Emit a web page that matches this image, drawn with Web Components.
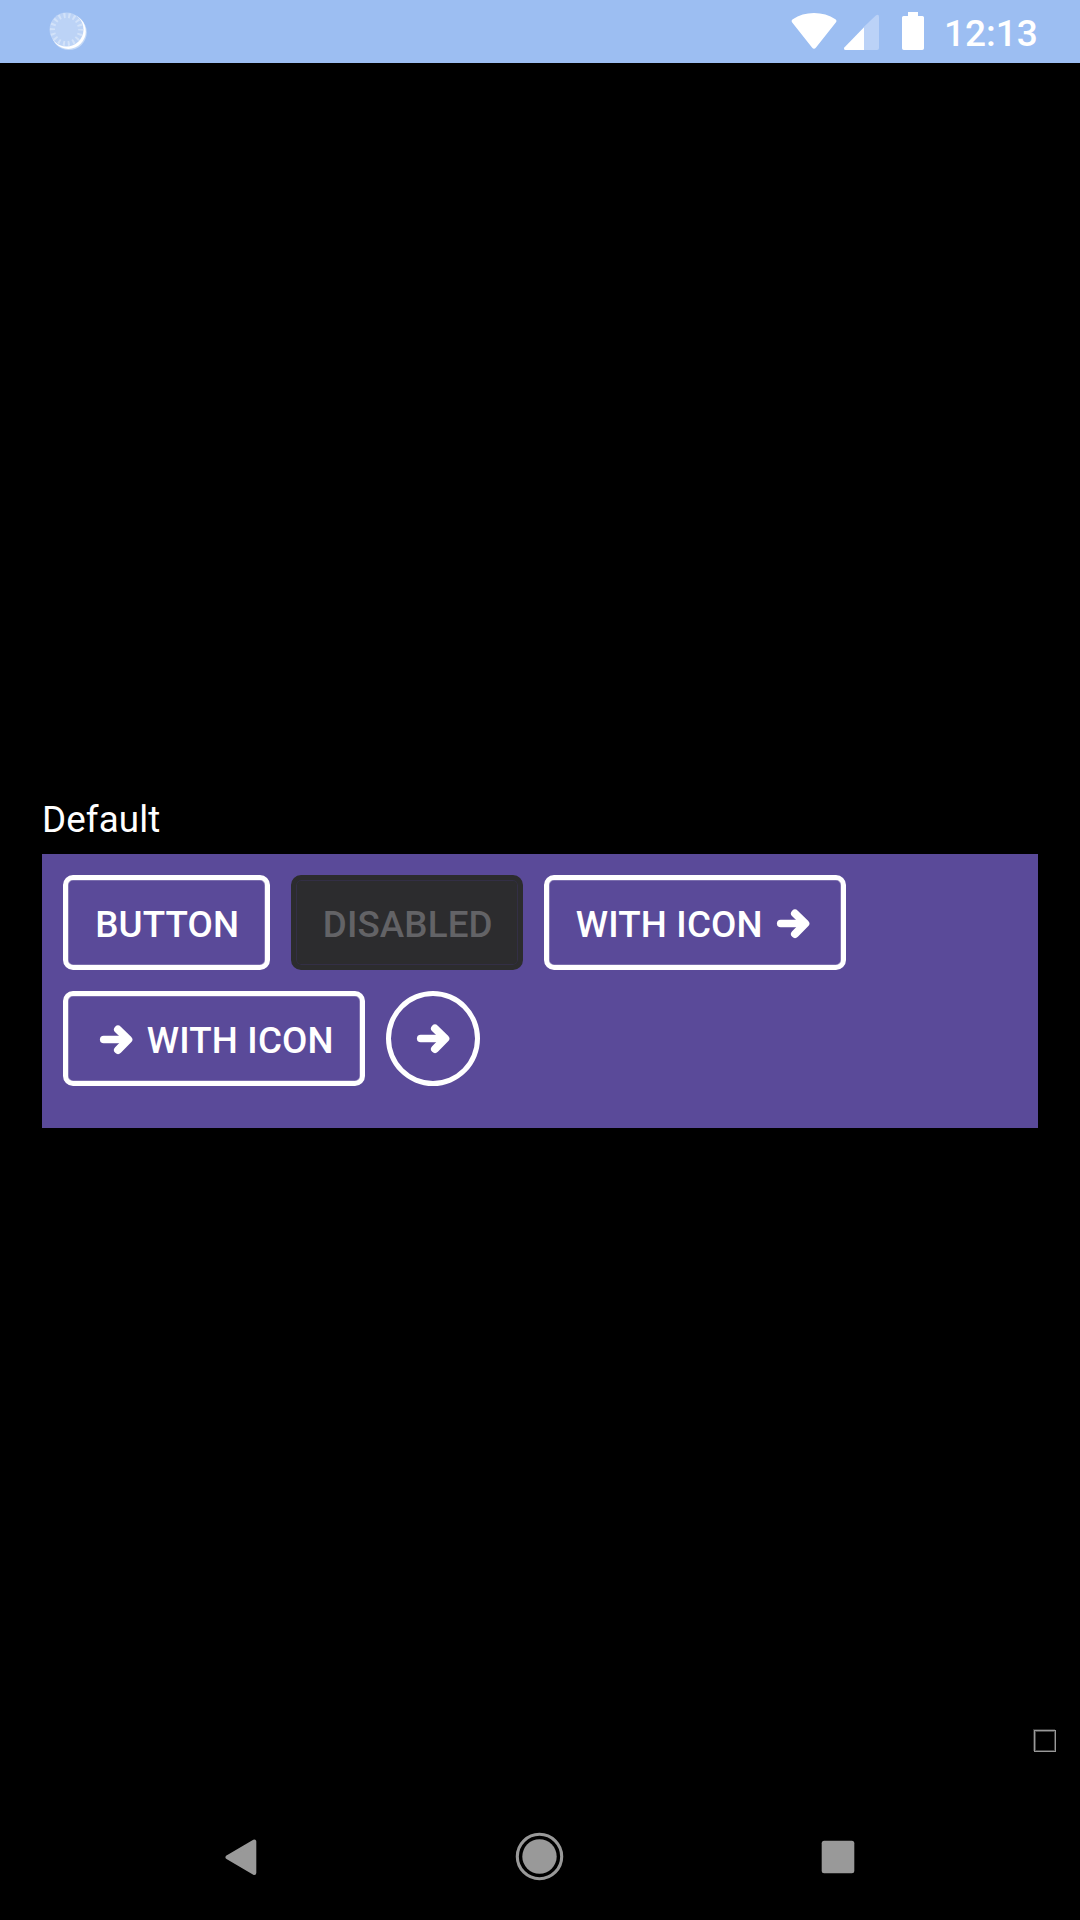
<!DOCTYPE html>
<html lang="en">
<head>
<meta charset="utf-8">
<title>Buttons</title>
<style>
html, body { margin: 0; background: #000; }
body { width: 1080px; height: 1920px; overflow: hidden; font-family: Roboto, sans-serif; }
</style>
</head>
<body>
<app-screen>
  <status-bar slot="top">12:13</status-bar>
  <button-group label="Default">
    <ui-button>BUTTON</ui-button>
    <ui-button disabled>DISABLED</ui-button>
    <ui-button icon="end">WITH ICON<arrow-icon slot="end"></arrow-icon></ui-button>
    <ui-button icon="start"><arrow-icon slot="start"></arrow-icon>WITH ICON</ui-button>
    <ui-button round><arrow-icon slot="start"></arrow-icon></ui-button>
  </button-group>
  <corner-box slot="footer"></corner-box>
  <nav-bar slot="bottom"></nav-bar>
</app-screen>
<script>
function define(name, html) {
  const template = document.createElement('template');
  template.innerHTML = html;
  customElements.define(name, class extends HTMLElement {
    constructor() {
      super();
      this.attachShadow({ mode: 'open' }).append(template.content.cloneNode(true));
    }
    connectedCallback() {
      const label = this.shadowRoot.querySelector('[data-label]');
      if (label) label.textContent = this.getAttribute('label');
    }
  });
}

define('app-screen', `
<style>
:host { display: flex; flex-direction: column; width: 1080px; height: 1920px; background: #000; color: #fff; }
main { flex: 1; display: flex; flex-direction: column; padding: 735px 42px 0; box-sizing: border-box; }
footer { display: flex; justify-content: flex-end; padding: 0 24px 42px 0; }
</style>
<slot name="top"></slot><main><slot></slot></main><footer><slot name="footer"></slot></footer><slot name="bottom"></slot>`);

define('status-bar', `
<style>
:host { display: flex; height: 63px; box-sizing: border-box; padding: 0 42px 0 48px; justify-content: space-between; background: #9cbef2; color: #fff; }
svg { display: block; }
.right { display: flex; width: 247px; }
.time { font: 500 37px/44px Roboto, sans-serif; padding-top: 12px; }
</style>
<svg width="42" height="63" viewBox="48 0 42 63">
  <circle cx="69" cy="32.3" r="17.8" fill="#c4d9f7"/>
  <circle cx="68.3" cy="31.4" r="17.5" fill="#fff"/>
  <circle cx="66.5" cy="29.5" r="17" fill="#bcd3f6"/>
  <circle cx="66.5" cy="29.5" r="14" fill="none" stroke="#d2e2f9" stroke-width="5" stroke-dasharray="2 2.887" stroke-dashoffset="1"/>
</svg>
<div class="right">
  <svg width="153" height="63" viewBox="791 0 153 63" fill="#fff">
    <path d="M792.2 22.5Q790.8 20.6 792.8 19.2Q802 13 814 13T835.4 19.2Q837.3 20.6 835.8 22.5L816 47.6Q814 50 812 47.6Z"/>
    <path d="M864 50V26.7L875.8 15.5Q879 13.4 879 17V48Q879 50 877 50Z" fill="#bbd2f7"/>
    <path d="M864 50V27.2L844.6 47.2Q843 49.4 845.5 50Z"/>
    <path d="M908 12H918V16H922.4Q924 16 924 17.6V48.2Q924 50 922.2 50H903.8Q902 50 902 48.2V17.6Q902 16 903.6 16H908Z"/>
  </svg>
  <span class="time"><slot></slot></span>
</div>`);

define('button-group', `
<style>
:host { display: block; }
.label { font: 400 36.75px/43px Roboto, sans-serif; letter-spacing: .1px; height: 56px; }
.panel { display: flex; flex-wrap: wrap; gap: 21px; padding: 21px 21px 42px; background: #5a4a99; }
</style>
<div class="label" data-label></div>
<div class="panel"><slot></slot></div>`);

define('ui-button', `
<style>
:host { display: flex; align-items: center; justify-content: center; box-sizing: border-box; width: 207px; height: 95px; border: 5px solid #fff; border-radius: 10px; color: #fff; font: 500 36.75px/43px Roboto, sans-serif; letter-spacing: .15px; white-space: nowrap; box-shadow: inset 0 0 0 .6px #9c92c2; padding: 3px 0 0 1.5px; gap: 13px; }
:host([disabled]) { width: 232px; border-color: #2c2c2e; background: #2c2c2e; color: #636366; box-shadow: inset 0 0 0 1px #332f45; }
:host([icon]) { width: 302px; }
:host([icon="end"]) { padding: 3px 3px 0 0; gap: 12.5px; }
:host([icon="start"]) { padding-left: 3.5px; }
:host([round]) { width: 94px; border-radius: 50%; box-shadow: none; padding: 1px 0 0; }
</style>
<slot name="start"></slot><slot></slot><slot name="end"></slot>`);

define('arrow-icon', `
<style>:host { display: block; width: 36px; height: 30px; } svg { display: block; }</style>
<svg width="36" height="30" viewBox="0 0 36 30" fill="none" stroke="#fff" stroke-linecap="round" stroke-linejoin="round">
  <path d="M5.7 14.5H28" stroke-width="7.6"/><path d="M20 4.5L30.3 14.5L20 25" stroke-width="8"/><path d="M23 10L28 14.5L23 19Z" fill="#fff" stroke-width="1"/>
</svg>`);

define('corner-box', `
<style>:host { display: block; width: 22px; height: 22px; box-sizing: border-box; border: 1px solid #999; box-shadow: inset 0 0 0 1px #444, -1px -1px 0 #333; background: #000; }</style>`);

define('nav-bar', `
<style>
:host { display: flex; height: 126px; align-items: center; justify-content: space-between; padding: 0 212px; }
svg { display: block; }
</style>
<svg width="60" height="60" viewBox="212 1827 60 60"><path d="M227.5 1857.3L254.3 1841.5V1873Z" fill="#999" stroke="#999" stroke-width="4" stroke-linejoin="round"/></svg>
<svg width="60" height="60" viewBox="510 1827 60 60"><circle cx="539.5" cy="1856.5" r="22.2" fill="none" stroke="#999" stroke-width="3.1"/><circle cx="539.5" cy="1856.5" r="17.2" fill="#999"/></svg>
<svg width="60" height="60" viewBox="808 1827 60 60"><rect x="821.7" y="1840.7" width="32.6" height="32.6" rx="2.5" fill="#999"/></svg>`);
</script>
</body>
</html>
